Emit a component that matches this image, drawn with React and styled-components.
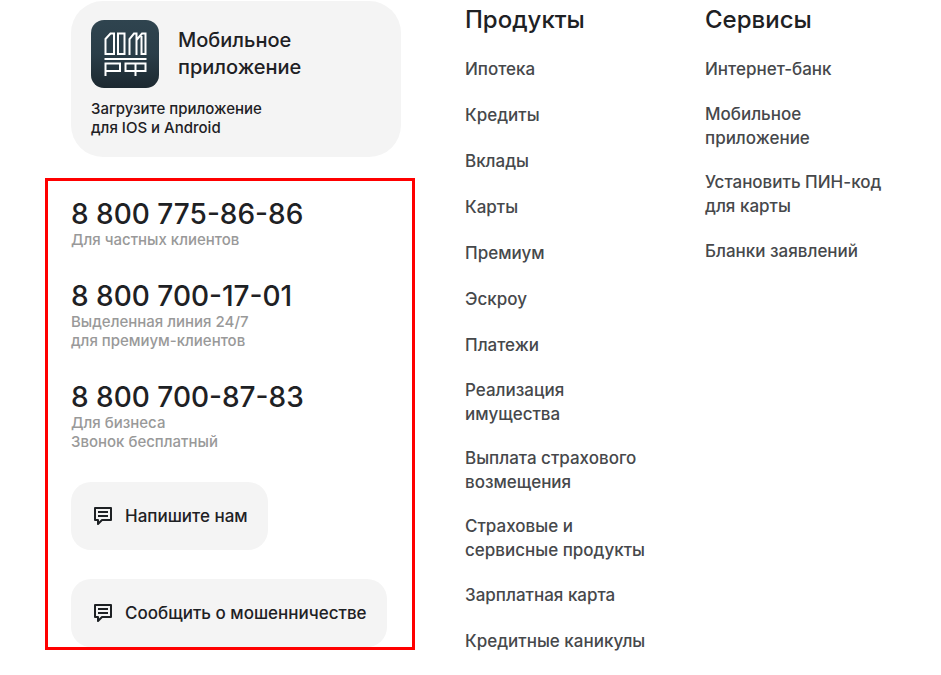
import React from 'react';
import styled, { createGlobalStyle } from 'styled-components';

const products = [
    'Ипотека',
    'Кредиты',
    'Вклады',
    'Карты',
    'Премиум',
    'Эскроу',
    'Платежи',
    'Реализация имущества',
    'Выплата страхового возмещения',
    'Страховые и сервисные продукты',
    'Зарплатная карта',
    'Кредитные каникулы',
]

const services = [
    'Интернет-банк',
    'Мобильное приложение',
    'Установить ПИН-код для карты',
    'Бланки заявлений',
]

const phones = [
    { number: '8 800 775-86-86', note: ['Для частных клиентов'] },
    { number: '8 800 700-17-01', note: ['Выделенная линия 24/7', 'для премиум-клиентов'] },
    { number: '8 800 700-87-83', note: ['Для бизнеса', 'Звонок бесплатный'] },
]

function AppLogo() {
    return (
        <svg width="68" height="68" viewBox="0 0 68 68" aria-hidden="true">
            <defs>
                <linearGradient id="logoBg" x1="0" y1="0" x2="0" y2="1">
                    <stop offset="0" stopColor="#2f444f" />
                    <stop offset="0.5" stopColor="#2a3d48" />
                    <stop offset="1" stopColor="#1c2830" />
                </linearGradient>
            </defs>
            <rect width="68" height="68" rx="13" fill="url(#logoBg)" />
            <g fill="none" stroke="#fff" strokeWidth="2">
                <path d="M14.5 34V19L19.5 13.5H23V34Z" />
                <path d="M27 13.5H33.5V34H27Z" />
                <path d="M38.5 35V19L43 13.5H45.5V35M45.5 20L51 13.5H54.5V34H50.5V16" />
                <path d="M13.5 39H55.5" />
                <path d="M14.5 56V43.5H29V51H14.5M34.5 43.5H54.5V51H34.5ZM44.5 43.5V56" />
            </g>
        </svg>
    )
}

function MessageIcon() {
    return (
        <svg width="20" height="20" viewBox="0 0 20 20" fill="none" stroke="currentColor" strokeWidth="2" strokeLinejoin="round" aria-hidden="true">
            <path d="M2 2H18V14H9L5 18V14H2Z" />
            <path d="M5 6H15M5 10H15" />
        </svg>
    )
}

function LinkColumn({ title, items }) {
    return (
        <nav aria-label={title}>
            <ColumnTitle>{title}</ColumnTitle>
            <LinkList>
                {items.map((item) => (
                    <li key={item}>
                        <a href="#">{item}</a>
                    </li>
                ))}
            </LinkList>
        </nav>
    )
}

export default function App() {
    return (
        <>
            <GlobalStyle />
            <Footer>
                <div>
                    <AppCard href="#">
                        <AppHead>
                            <AppLogo />
                            <h3>Мобильное приложение</h3>
                        </AppHead>
                        <p>Загрузите приложение<br />для IOS и Android</p>
                    </AppCard>
                    <Contacts>
                        {phones.map(({ number, note }) => (
                            <Phone key={number}>
                                <a href={`tel:${number.replace(/\D/g, '')}`}>{number}</a>
                                {note.map((line) => <p key={line}>{line}</p>)}
                            </Phone>
                        ))}
                        <Actions>
                            <ActionButton type="button"><MessageIcon />Напишите нам</ActionButton>
                            <ActionButton type="button"><MessageIcon />Сообщить о мошенничестве</ActionButton>
                        </Actions>
                    </Contacts>
                </div>
                <LinkColumn title="Продукты" items={products} />
                <LinkColumn title="Сервисы" items={services} />
            </Footer>
        </>
    )
}

const GlobalStyle = createGlobalStyle`
    * {
        margin: 0;
        padding: 0;
        box-sizing: border-box;
    }

    body {
        background: #fff;
        color: #1e2124;
        font-family: Inter, "Liberation Sans", sans-serif;
    }

    a {
        color: inherit;
        text-decoration: none;
    }
`

const Footer = styled.footer`
    display: grid;
    grid-template-columns: 37fr 19fr 19fr;
    column-gap: 50px;
    padding: 1px 46px 24px 45px;
`

const AppCard = styled.a`
    display: block;
    margin: 0 14px 21px 26px;
    padding: 19px 20px 20px;
    border-radius: 32px;
    background: #f4f4f4;

    p {
        margin-top: 11px;
        font-size: 15px;
        font-weight: 500;
        line-height: 19px;
    }
`

const AppHead = styled.div`
    display: flex;
    align-items: center;
    gap: 19px;

    svg {
        flex-shrink: 0;
    }

    h3 {
        max-width: 160px;
        font-size: 20px;
        font-weight: 500;
        line-height: 27px;
    }
`

const Contacts = styled.section`
    display: flex;
    flex-direction: column;
    gap: 31px;
    padding: 17px 23px 0;
    border: 3px solid #ff0000;
`

const Phone = styled.div`
    a {
        display: block;
        font-size: 28px;
        font-weight: 500;
        line-height: 32px;
    }

    p {
        color: #999;
        font-size: 15px;
        font-weight: 500;
        line-height: 19px;
    }
`

const Actions = styled.div`
    display: flex;
    flex-direction: column;
    align-items: flex-start;
    gap: 29px;
`

const ActionButton = styled.button`
    display: flex;
    align-items: center;
    gap: 12px;
    height: 68px;
    padding: 0 20px 0 22px;
    border: none;
    border-radius: 20px;
    background: #f4f4f4;
    color: #1e2124;
    font-family: inherit;
    font-size: 17px;
    font-weight: 500;
    cursor: pointer;
`

const ColumnTitle = styled.h2`
    margin-bottom: 18px;
    font-size: 24px;
    font-weight: 500;
    line-height: 37px;
`

const LinkList = styled.ul`
    display: flex;
    flex-direction: column;
    gap: 20px;
    list-style: none;

    li {
        display: flex;
        align-items: center;
        min-height: 26px;
    }

    a {
        color: #46484b;
        font-size: 17px;
        font-weight: 500;
        line-height: 24px;
    }
`
